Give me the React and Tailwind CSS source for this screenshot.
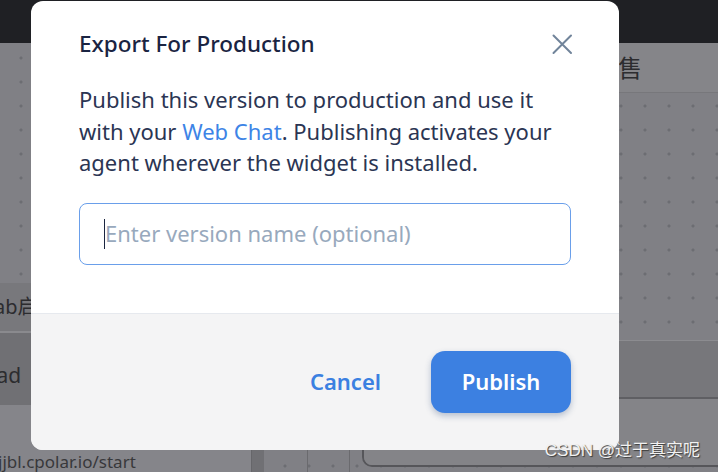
import React from "react";

// Publish dialog over a dimmed editor page

const dots =
  "bg-[radial-gradient(circle,#6c6d72_1.3px,transparent_1.8px)] bg-[length:24px_24px] bg-[position:9px_3px]";

function CloseIcon() {
  return (
    <svg width="22" height="22" viewBox="0 0 22 22" fill="none">
      <path
        d="M2.5 2.5 20 20M20 2.5 2.5 20"
        stroke="#71849a"
        strokeWidth="2"
        strokeLinecap="round"
      />
    </svg>
  );
}

function Backdrop() {
  return (
    <div className="flex flex-col h-full">
      <div className="h-[43px] bg-[#1f2024] shrink-0" />
      <div className={`flex-1 flex bg-[#808085] ${dots}`}>
        {/* left side panel */}
        <div className="w-[251px] flex flex-col text-[#2c2c2f] overflow-hidden">
          <div className="h-[240px]" />
          <div className="h-[50px] bg-[#78787c] border-b-2 border-[#8a8a8e] flex items-center whitespace-nowrap text-[20px]">
            <span className="-ml-[38px]">Gitlab启动</span>
          </div>
          <div className="h-[72px] bg-[#707074] flex items-center pt-[14px] whitespace-nowrap text-[21px]">
            <span className="-ml-[50px]">Upload</span>
          </div>
          <div className="flex-1 bg-[#85858a] flex items-end whitespace-nowrap text-[17px] text-[#38383b]">
            <span className="-ml-[2px] mb-[-2px]">jjbl.cpolar.io/start</span>
          </div>
        </div>
        <div className="w-[13px] bg-[#707074] border-l border-[#66666a]" />
        {/* right work area */}
        <div className="flex-1 flex flex-col">
          <div className="h-[50px] bg-[#858589] border-b border-[#77777b] flex items-center text-[24px] text-[#2c2c2f] whitespace-nowrap overflow-hidden">
            <span className="pl-[354px]">售</span>
          </div>
          <div className="flex-1 flex">
            <div className="w-[43px]" />
            <div className="w-px bg-[#6a6a6e]" />
            <div className="w-[41px]" />
            <div className="w-px bg-[#6a6a6e]" />
            <div className="w-[12px]" />
            <div className="flex-1 mt-[247px] mb-[5px] -mr-[4px] border-l-2 border-b-2 border-t border-[#56565a] border-t-[#8c8c90] rounded-bl-[10px] flex flex-col overflow-hidden">
              <div className="h-[58px] bg-[#77777b] border-b-2 border-[#5f5f63]" />
              <div className="flex-1 bg-[#848488]" />
            </div>
          </div>
        </div>
      </div>
    </div>
  );
}

export default function App() {
  return (
    <div className="relative w-[718px] h-[472px] overflow-hidden font-['Noto_Sans','Noto_Sans_CJK_SC',sans-serif]">
      <Backdrop />

      {/* dialog */}
      <div className="absolute left-[31px] top-[1px] w-[588px] h-[449px] bg-white rounded-[12px] overflow-hidden flex flex-col">
        <div className="px-12 pt-7 pb-12 border-b border-[#e6e9ee]">
          <div className="flex items-center justify-between">
            <h2 className="text-[22.5px] leading-[30px] font-medium text-[#1a2442]">
              Export For Production
            </h2>
            <button className="-mr-[2px]">
              <CloseIcon />
            </button>
          </div>
          <p className="mt-[25px] text-[22px] leading-[31.6px] text-[#2b3553]">
            Publish this version to production and use it with your{" "}
            <span className="text-[#3d84e6]">Web Chat</span>. Publishing
            activates your agent wherever the widget is installed.
          </p>
          <div className="mt-[24px] h-[62px] rounded-[8px] border border-[#6a9fea] pl-6 pr-4 flex items-center">
            <span className="w-px h-[30px] bg-[#1b2540] shrink-0" />
            <input
              className="flex-1 bg-transparent outline-none text-[22px] text-[#2b3553] placeholder:text-[#98a9bd]"
              placeholder="Enter version name (optional)"
            />
          </div>
        </div>
        <div className="flex-1 bg-[#f4f4f5] px-12 flex items-center justify-end gap-[26px]">
          <button className="px-6 text-[22px] font-semibold text-[#3b80e1]">
            Cancel
          </button>
          <button className="h-[62px] w-[140px] rounded-[14px] bg-[#3c80e1] text-white text-[22px] font-semibold shadow-[0_3px_6px_rgba(40,70,120,0.3)]">
            Publish
          </button>
        </div>
      </div>

      {/* watermark */}
      <div className="absolute right-[18px] bottom-[9px] text-[17px] text-[#f2f2f2] [text-shadow:1px_1px_1px_#3a3a3a] font-['Liberation_Sans','Noto_Sans_CJK_SC',sans-serif]">
        CSDN @过于真实呢
      </div>
    </div>
  );
}
